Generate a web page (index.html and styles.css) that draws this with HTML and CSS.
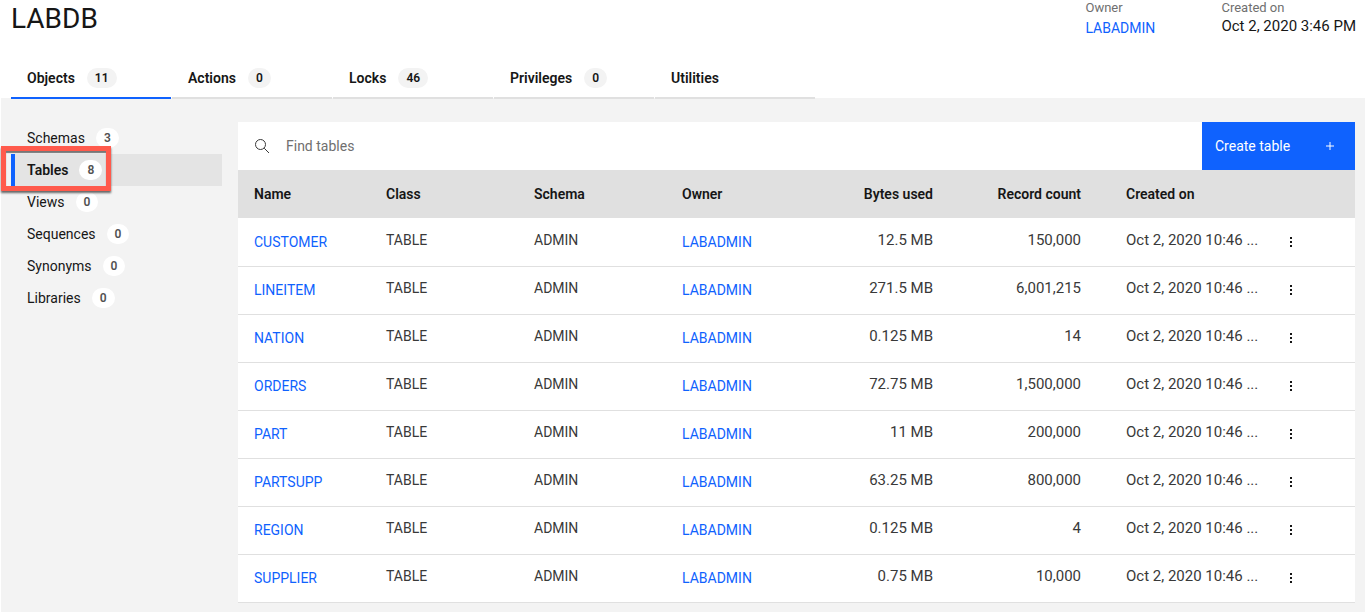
FILE: index.html
```html
<!DOCTYPE html>
<html lang="en">
<head>
<meta charset="utf-8">
<title>LABDB</title>
<link rel="stylesheet" href="styles.css">
</head>
<body>
<header class="header">
  <h1 class="title">LABDB</h1>
  <dl class="meta">
    <div class="meta-item"><dt>Owner</dt><dd class="meta-link"><a class="link" href="#">LABADMIN</a></dd></div>
    <div class="meta-item"><dt>Created on</dt><dd>Oct 2, 2020 3:46 PM</dd></div>
  </dl>
</header>
<nav class="tabs" aria-label="Sections">
  <a class="tab tab-active" href="#">Objects <span class="badge">11</span></a>
  <a class="tab" href="#">Actions <span class="badge">0</span></a>
  <a class="tab" href="#">Locks <span class="badge">46</span></a>
  <a class="tab" href="#">Privileges <span class="badge">0</span></a>
  <a class="tab" href="#">Utilities</a>
</nav>
<div class="workspace">
  <nav class="sidebar" aria-label="Objects">
    <a class="side-item" href="#">Schemas <span class="badge">3</span></a>
    <div class="side-current">
      <a class="side-item side-active" href="#">Tables <span class="badge">8</span></a>
      <div class="callout"></div>
    </div>
    <a class="side-item" href="#">Views <span class="badge">0</span></a>
    <a class="side-item" href="#">Sequences <span class="badge">0</span></a>
    <a class="side-item" href="#">Synonyms <span class="badge">0</span></a>
    <a class="side-item" href="#">Libraries <span class="badge">0</span></a>
  </nav>
  <main class="content">
    <div class="toolbar">
      <label class="search">
        <svg class="search-icon" width="16" height="16" viewBox="0 0 16 16" fill="none" stroke="#393939" aria-hidden="true"><circle cx="6.5" cy="6.5" r="5"/><path d="M10.2 10.2 15 15"/></svg>
        <input class="search-input" type="text" placeholder="Find tables" aria-label="Find tables">
      </label>
      <button class="create" type="button">Create table
        <svg width="16" height="16" viewBox="0 0 16 16" stroke="#fff" aria-hidden="true"><path d="M8 4v8M4 8h8"/></svg>
      </button>
    </div>
    <table class="grid">
      <colgroup><col class="col-name"><col class="col-text"><col class="col-text"><col class="col-text"><col class="col-bytes"><col class="col-text"><col class="col-date"><col class="col-menu"></colgroup>
      <thead>
        <tr><th>Name</th><th>Class</th><th>Schema</th><th>Owner</th><th class="num">Bytes used</th><th class="num">Record count</th><th class="date">Created on</th><th></th></tr>
      </thead>
      <tbody id="rows"></tbody>
    </table>
  </main>
</div>
<script src="tables.js"></script>
</body>
</html>
```
FILE: styles.css
```css
* { box-sizing: border-box; }
body {
  margin: 0;
  min-height: 100vh;
  display: flex;
  flex-direction: column;
  background: #fff;
  color: #161616;
  font: 14px/20px Roboto, "Liberation Sans", sans-serif;
}
a { color: inherit; text-decoration: none; }
.link { color: #0f62fe; }
.header {
  display: flex;
  justify-content: space-between;
  padding: 0 9px 0 11px;
  min-height: 59px;
}
.title { margin: 0; font-size: 28px; line-height: 38px; font-weight: 400; }
.meta { display: flex; gap: 64px; margin: 0; }
.meta-item { min-width: 72px; }
.meta dt { font-size: 13px; line-height: 16px; color: #6f6f6f; }
.meta dd { margin: 0; font-size: 15px; }
.meta .meta-link { padding-top: 2px; font-size: 14px; }
.tabs {
  display: flex;
  gap: 1px;
  padding-left: 11px;
  margin-bottom: -1px;
  position: relative;
  z-index: 1;
}
.tab {
  display: flex;
  align-items: center;
  gap: 12px;
  width: 160px;
  height: 40px;
  padding-left: 16px;
  border-bottom: 2px solid #e0e0e0;
  font-weight: 600;
}
.tab-active { border-bottom-color: #0f62fe; }
.badge {
  min-width: 22px;
  padding: 0 8px;
  border-radius: 10px;
  background: #f3f3f3;
  font-size: 12px;
  font-weight: 600;
  text-align: center;
}
.workspace {
  flex: 1;
  display: flex;
  gap: 16px;
  margin-left: 1px;
  padding: 24px 10px 9px;
  background: #f3f3f3;
}
.sidebar { flex: 0 0 211px; }
.side-item {
  display: flex;
  align-items: center;
  gap: 11px;
  height: 32px;
  padding-left: 16px;
}
.side-item .badge { background: #fff; color: #525252; }
.side-active {
  padding-left: 12px;
  border-left: 4px solid #0f62fe;
  background: #e4e4e4;
  font-weight: 600;
}
.side-current { position: relative; }
.callout {
  position: absolute;
  left: -10px;
  top: -8px;
  width: 110px;
  height: 45px;
  border: 5px solid #ff5a4c;
  box-shadow: 0 2px 2px #666, inset 0 2px 1px #777;
  pointer-events: none;
}
.content { flex: 1; min-width: 0; }
.toolbar { display: flex; height: 48px; background: #fff; }
.search { flex: 1; display: flex; align-items: center; gap: 16px; padding-left: 16px; }
.search-input {
  flex: 1;
  height: 100%;
  padding: 0;
  border: 0;
  outline: 0;
  background: none;
  font: inherit;
  color: #161616;
}
.search-input::placeholder { color: #6f6f6f; opacity: 1; }
.create {
  display: flex;
  align-items: center;
  justify-content: space-between;
  width: 153px;
  padding: 0 17px 0 13px;
  border: 0;
  background: #0f62fe;
  color: #fff;
  font: inherit;
}
.grid { width: 100%; table-layout: fixed; border-spacing: 0; background: #fff; }
.col-name { width: 132px; }
.col-text { width: 148px; }
.col-bytes { width: 135px; }
.col-date { width: 178px; }
.col-menu { width: 80px; }
.grid th {
  height: 48px;
  padding: 0 16px;
  background: #e0e0e0;
  text-align: left;
  font-weight: 600;
}
.grid td {
  height: 48px;
  padding: 0 16px 5px;
  border-bottom: 1px solid #e0e0e0;
  color: #393939;
  white-space: nowrap;
}
.grid .linked { padding-bottom: 1px; }
.grid .num { text-align: right; }
.grid td.num, .grid td.date { font-size: 15px; }
.grid .date { padding-left: 29px; padding-right: 0; }
.grid .menu { padding: 0 8px 1px; }
.grid tbody tr:first-child td { height: 49px; padding-top: 1px; }
.menu-button {
  display: block;
  width: 16px;
  height: 16px;
  padding: 0;
  border: 0;
  background: none;
}
.menu-button svg { display: block; }
```
FILE: tables.js
```js
const tables = [
  ["CUSTOMER", "12.5 MB", "150,000"],
  ["LINEITEM", "271.5 MB", "6,001,215"],
  ["NATION", "0.125 MB", "14"],
  ["ORDERS", "72.75 MB", "1,500,000"],
  ["PART", "11 MB", "200,000"],
  ["PARTSUPP", "63.25 MB", "800,000"],
  ["REGION", "0.125 MB", "4"],
  ["SUPPLIER", "0.75 MB", "10,000"]
];
document.getElementById("rows").innerHTML = tables.map(([name, bytes, count]) => `
  <tr>
    <td class="linked"><a class="link" href="#">${name}</a></td>
    <td>TABLE</td>
    <td>ADMIN</td>
    <td class="linked"><a class="link" href="#">LABADMIN</a></td>
    <td class="num">${bytes}</td>
    <td class="num">${count}</td>
    <td class="date">Oct 2, 2020 10:46 ...</td>
    <td class="menu"><button class="menu-button" type="button" aria-label="Actions for ${name}"><svg width="16" height="16" viewBox="0 0 16 16" fill="#161616"><path d="M7 3h2v2H7zM7 7h2v2H7zM7 11h2v2H7z"/></svg></button></td>
  </tr>`).join("");
```
